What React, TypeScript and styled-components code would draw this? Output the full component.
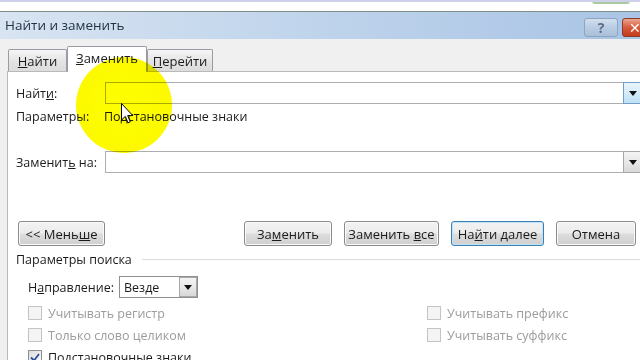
import styled, { createGlobalStyle, css } from 'styled-components';

const GlobalStyle = createGlobalStyle`
  html, body {
    margin: 0;
    padding: 0;
    background: #ffffff;
  }
  body {
    font-family: 'Open Sans', 'Noto Sans', 'DejaVu Sans', sans-serif;
    font-size: 12.5px;
    color: #1b1b1b;
  }
`;

const Screen = styled.div`
  position: relative;
  width: 640px;
  height: 360px;
  overflow: hidden;
  background: #ffffff;
`;

const DocStrip = styled.div`
  height: 11px;
  border-top: 2px solid #cfd0ea;
  box-sizing: border-box;
  position: relative;
  overflow: hidden;
  background: #ffffff;
`;

const DocText = styled.span`
  position: absolute;
  left: 40px;
  top: 3px;
  height: 6px;
  overflow: hidden;
  font-family: 'Liberation Serif', serif;
  font-size: 24px;
  line-height: 30px;
  color: #111;
`;

const StatusBlob = styled.span`
  position: absolute;
  right: 10px;
  top: -4px;
  width: 38px;
  height: 6px;
  border-radius: 3px;
  background: #a9c9a4;
`;

const Dialog = styled.div`
  border-top: 1px solid #7f8f86;
  display: flex;
  flex-direction: column;
`;

const TitleBar = styled.div`
  height: 27px;
  display: flex;
  align-items: center;
  padding-left: 5px;
  background: linear-gradient(to right, #d8e4f1 0%, #c1d5ec 45%, #a9c4e5 100%);
`;

const Title = styled.div`
  flex: 1;
  font-size: 13.5px;
  color: #1f3143;
  margin-top: -1px;
`;

const CaptionButton = styled.div<{ $close?: boolean }>`
  height: 19px;
  margin-top: 3px;
  box-sizing: border-box;
  border-radius: 3px;
  display: flex;
  align-items: center;
  justify-content: center;
  font-weight: 700;
  font-size: 14px;
  flex-shrink: 0;
  ${(p) =>
    p.$close
      ? css`
          width: 26px;
          margin-right: -8px;
          border: 1px solid #8d3b2b;
          background: linear-gradient(#eba48f, #d65a3c 50%, #c23d1c);
          color: #ffffff;
          justify-content: flex-start;
          padding-left: 6px;
        `
      : css`
          width: 34px;
          margin-right: 4px;
          border: 1px solid #8ea5c0;
          background: linear-gradient(#d3dfee, #b9cce3 50%, #a9bfd9);
          color: #5a6d85;
        `}
`;

const Body = styled.div`
  background: #f0f0f0;
  padding-left: 7px;
`;

const TabRow = styled.div`
  height: 33px;
  display: flex;
  align-items: flex-end;
  padding-left: 1px;
  border-bottom: 1px solid #b9b9b9;
  box-sizing: border-box;
`;

const Tab = styled.div<{ $active?: boolean; $w: number }>`
  width: ${(p) => p.$w}px;
  box-sizing: border-box;
  display: flex;
  align-items: center;
  justify-content: center;
  border: 1px solid #9a9ca3;
  border-bottom: none;
  border-radius: 2px 2px 0 0;
  font-size: 13px;
  ${(p) =>
    p.$active
      ? css`
          height: 26px;
          margin-bottom: -1px;
          background: #ffffff;
          padding-bottom: 3px;
          position: relative;
        `
      : css`
          height: 22px;
          background: linear-gradient(#f6f6f6, #e5e5e5 50%, #dcdcdc);
        `}
`;

const Panel = styled.div`
  background: #ffffff;
  border-left: 1px solid #b9b9b9;
  height: 300px;
  padding-left: 8px;
  display: flex;
  flex-direction: column;
`;

const FieldRow = styled.div<{ $top: number }>`
  margin-top: ${(p) => p.$top}px;
  height: 22px;
  display: flex;
  align-items: center;
`;

const Label = styled.div<{ $w: number }>`
  width: ${(p) => p.$w}px;
  flex-shrink: 0;
`;

const Combo = styled.div`
  width: 538px;
  height: 22px;
  display: flex;
  flex-shrink: 0;
`;

const ComboInput = styled.div`
  flex: 1;
  box-sizing: border-box;
  border: 1px solid #abadb3;
  border-right: none;
  background: #fff;
  display: flex;
  align-items: center;
  padding-left: 4px;
`;

const DropButton = styled.div<{ $hot?: boolean; $w?: number }>`
  width: ${(p) => p.$w ?? 20}px;
  box-sizing: border-box;
  display: flex;
  align-items: center;
  justify-content: center;
  border: 1px solid ${(p) => (p.$hot ? '#6f9fc4' : '#a8a8a8')};
  background: ${(p) =>
    p.$hot
      ? 'linear-gradient(#e9f5fd, #d4ebfa 50%, #bfe0f6)'
      : 'linear-gradient(#f4f4f4, #e8e8e8 50%, #d8d8d8)'};
  svg {
    display: block;
  }
`;

const InfoRow = styled.div`
  height: 24px;
  display: flex;
  align-items: center;
`;

const ButtonRow = styled.div`
  margin-top: 48px;
  height: 25px;
  display: flex;
  align-items: center;
  padding-left: 2px;
`;

const ActionGroup = styled.div`
  margin-left: auto;
  display: flex;
  gap: 12px;
  margin-right: 4px;
`;

const Button = styled.div<{ $w: number; $focused?: boolean }>`
  width: ${(p) => p.$w}px;
  height: 25px;
  box-sizing: border-box;
  border-radius: 3px;
  display: flex;
  align-items: center;
  justify-content: center;
  font-size: 13px;
  border: 1px solid ${(p) => (p.$focused ? '#3c7fb1' : '#8a8a8a')};
  background: linear-gradient(#f3f3f3, #ebebeb 48%, #dddddd 52%, #cfcfcf);
  box-shadow: inset 0 0 0 1px ${(p) => (p.$focused ? '#bfe3f8' : '#fbfbfb')};
`;

const GroupTitle = styled.div`
  margin-top: 5px;
  height: 16px;
  display: flex;
  align-items: center;
  gap: 10px;
  &::after {
    content: '';
    flex: 1;
    height: 1px;
    background: #dcdcdc;
  }
`;

const DirectionRow = styled.div`
  margin-top: 9px;
  height: 22px;
  display: flex;
  align-items: center;
  padding-left: 12px;
`;

const Select = styled.div`
  width: 79px;
  height: 22px;
  display: flex;
  box-sizing: border-box;
  border: 1px solid #8e8f8f;
`;

const SelectValue = styled.div`
  flex: 1;
  display: flex;
  align-items: center;
  padding-left: 4px;
`;

const OptionsGrid = styled.div`
  margin-top: 4px;
  padding-left: 12px;
  display: grid;
  grid-template-columns: 399px 1fr;
  grid-auto-rows: 22px;
`;

const CheckItem = styled.div<{ $disabled?: boolean }>`
  display: flex;
  align-items: center;
  gap: 6px;
  color: ${(p) => (p.$disabled ? '#9c9c9c' : '#1b1b1b')};
`;

const Box = styled.span<{ $disabled?: boolean }>`
  width: 14px;
  height: 14px;
  box-sizing: border-box;
  border: 1px solid ${(p) => (p.$disabled ? '#c4c4c4' : '#8e8f8f')};
  background: ${(p) =>
    p.$disabled ? '#f4f4f4' : 'linear-gradient(135deg, #dcdcdc, #fbfbfb)'};
  display: flex;
  align-items: center;
  justify-content: center;
`;

const Highlight = styled.div`
  position: absolute;
  left: 76px;
  top: 57px;
  width: 96px;
  height: 96px;
  border-radius: 50%;
  background: radial-gradient(circle, #ffff00 0%, #fcf800 86%, rgba(252, 248, 0, 0) 100%);
  mix-blend-mode: multiply;
  pointer-events: none;
`;

const Cursor = styled.svg`
  position: absolute;
  left: 121px;
  top: 103px;
`;

function Arrow() {
  return (
    <svg width="8" height="5" viewBox="0 0 8 5">
      <path d="M0 0 H8 L4 5 Z" fill="#111" />
    </svg>
  );
}

export default function App() {
  return (
    <Screen>
      <GlobalStyle />
      <DocStrip>
        <DocText>Уфф</DocText>
        <StatusBlob />
      </DocStrip>
      <Dialog>
        <TitleBar>
          <Title>Найти и заменить</Title>
          <CaptionButton>?</CaptionButton>
          <CaptionButton $close>✕</CaptionButton>
        </TitleBar>
        <Body>
          <TabRow>
            <Tab $w={59}>
              <span>
                <u>Н</u>айти
              </span>
            </Tab>
            <Tab $w={80} $active>
              <span>
                <u>З</u>аменить
              </span>
            </Tab>
            <Tab $w={66}>
              <span>
                <u>П</u>ерейти
              </span>
            </Tab>
          </TabRow>
          <Panel>
            <FieldRow $top={10}>
              <Label $w={89}>
                Найт<u>и</u>:
              </Label>
              <Combo>
                <ComboInput />
                <DropButton $hot>
                  <Arrow />
                </DropButton>
              </Combo>
            </FieldRow>
            <InfoRow>
              <Label $w={88}>Параметры:</Label>
              <span>Подстановочные знаки</span>
            </InfoRow>
            <FieldRow $top={23}>
              <Label $w={89}>
                Заменит<u>ь</u> на:
              </Label>
              <Combo>
                <ComboInput />
                <DropButton>
                  <Arrow />
                </DropButton>
              </Combo>
            </FieldRow>
            <ButtonRow>
              <Button $w={87}>
                <span>
                  &lt;&lt; Мень<u>ш</u>е
                </span>
              </Button>
              <ActionGroup>
                <Button $w={88}>
                  <span>
                    За<u>м</u>енить
                  </span>
                </Button>
                <Button $w={95}>
                  <span>
                    Заменить <u>в</u>се
                  </span>
                </Button>
                <Button $w={93} $focused>
                  <span>
                    На<u>й</u>ти далее
                  </span>
                </Button>
                <Button $w={80}>Отмена</Button>
              </ActionGroup>
            </ButtonRow>
            <GroupTitle>Параметры поиска</GroupTitle>
            <DirectionRow>
              <Label $w={91}>
                Н<u>а</u>правление:
              </Label>
              <Select>
                <SelectValue>Везде</SelectValue>
                <DropButton $w={18}>
                  <Arrow />
                </DropButton>
              </Select>
            </DirectionRow>
            <OptionsGrid>
              <CheckItem $disabled>
                <Box $disabled />
                Учитывать регистр
              </CheckItem>
              <CheckItem $disabled>
                <Box $disabled />
                Учитывать префикс
              </CheckItem>
              <CheckItem $disabled>
                <Box $disabled />
                Только слово целиком
              </CheckItem>
              <CheckItem $disabled>
                <Box $disabled />
                Учитывать суффикс
              </CheckItem>
              <CheckItem>
                <Box>
                  <svg width="10" height="9" viewBox="0 0 10 9">
                    <path d="M1 4.5 L4 7.5 L9 1" fill="none" stroke="#2b4f9a" strokeWidth="1.8" />
                  </svg>
                </Box>
                Подстановочные знаки
              </CheckItem>
            </OptionsGrid>
          </Panel>
        </Body>
      </Dialog>
      <Highlight />
      <Cursor width="13" height="21" viewBox="0 0 13 21">
        <path
          d="M0.5 0.5 L0.5 17 L4.3 13.4 L7 19.8 L9.3 18.8 L6.7 12.6 L11.8 12.6 Z"
          fill="#ffffff"
          stroke="#000"
          strokeWidth="1"
        />
      </Cursor>
    </Screen>
  );
}
